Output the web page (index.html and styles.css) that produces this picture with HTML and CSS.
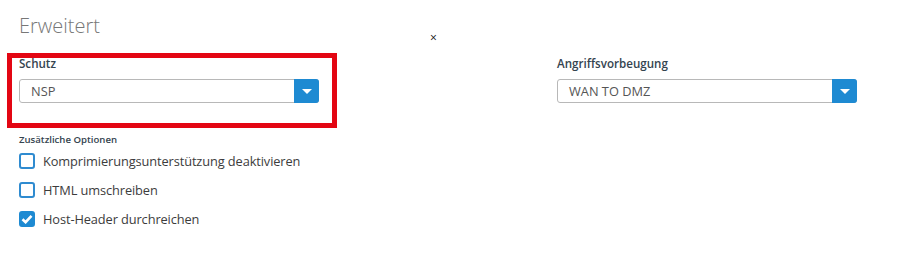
FILE: index.html
```html
<!doctype html>
<html lang="de">
<head>
    <meta charset="UTF-8">
    <title>Erweitert</title>
    <link rel="stylesheet" href="styles.css">
</head>
<body>

<div class="page">
    <h2 class="title">Erweitert</h2>
    <span class="close-mark">&times;</span>

    <div class="fields">
        <div class="field field-marked">
            <label class="field-label">Schutz</label>
            <div class="select">
                <span class="select-value">NSP</span>
                <span class="select-btn"><i class="caret"></i></span>
            </div>
        </div>
        <div class="field">
            <label class="field-label">Angriffsvorbeugung</label>
            <div class="select">
                <span class="select-value">WAN TO DMZ</span>
                <span class="select-btn"><i class="caret"></i></span>
            </div>
        </div>
    </div>

    <div class="options">
        <p class="options-title">Zusätzliche Optionen</p>
        <label class="check"><span class="box"></span>Komprimierungsunterstützung deaktivieren</label>
        <label class="check"><span class="box"></span>HTML umschreiben</label>
        <label class="check"><span class="box checked">
            <svg width="12" height="10" viewBox="0 0 12 10"><path d="M1.5 5.2 L4.6 8.2 L10.5 1.8" fill="none" stroke="#fff" stroke-width="2.6"/></svg>
        </span>Host-Header durchreichen</label>
    </div>
</div>

</body>
</html>
```

FILE: styles.css
```css
* {
    margin: 0;
    padding: 0;
    box-sizing: border-box;
}
body {
    background: #fff;
    font-family: "Open Sans", "Liberation Sans", sans-serif;
    color: #333;
}
.page {
    position: relative;
    padding: 12px 19px 0;
}
.title {
    font-size: 20px;
    font-weight: 300;
    color: #777;
    line-height: 28px;
}
.close-mark {
    position: absolute;
    left: 430px;
    top: 29px;
    font-size: 12px;
    color: #111;
}
.fields {
    display: flex;
    gap: 238px;
    margin-top: 16px;
}
.field {
    width: 300px;
}
.field-marked {
    position: relative;
}
/* rote Markierung um das Feld */
.field-marked:after {
    content: '';
    position: absolute;
    left: -12px;
    top: -3px;
    right: -18px;
    bottom: -25px;
    border: 5px solid #e30613;
}
.field-label {
    display: block;
    font-size: 11.6px;
    font-weight: 600;
    color: #34444f;
    line-height: 16px;
    margin-bottom: 7px;
}
.select {
    display: flex;
    height: 24px;
    border: 1px solid #b8b8b8;
    border-radius: 3px;
}
.select-value {
    flex: 1;
    padding-left: 11px;
    font-size: 12.8px;
    line-height: 22px;
    color: #555;
}
.select-btn {
    width: 25px;
    margin: -1px -1px -1px 0;
    background: #1e8ad2;
    border-radius: 0 3px 3px 0;
    display: flex;
    align-items: center;
    justify-content: center;
}
.caret {
    width: 0;
    height: 0;
    border-left: 5px solid transparent;
    border-right: 5px solid transparent;
    border-top: 5px solid #fff;
}
.options {
    margin-top: 31px;
}
.options-title {
    font-size: 9.6px;
    font-weight: 600;
    color: #34444f;
    line-height: 12px;
}
.check {
    display: flex;
    align-items: center;
    gap: 8px;
    height: 29px;
    font-size: 12.8px;
    letter-spacing: -0.1px;
    color: #3c3c3c;
}
.box {
    width: 16px;
    height: 16px;
    border: 2px solid #2f8bd0;
    border-radius: 3px;
    display: flex;
    align-items: center;
    justify-content: center;
}
.box.checked {
    background: #1e8ad2;
    border-color: #1e8ad2;
}
```
